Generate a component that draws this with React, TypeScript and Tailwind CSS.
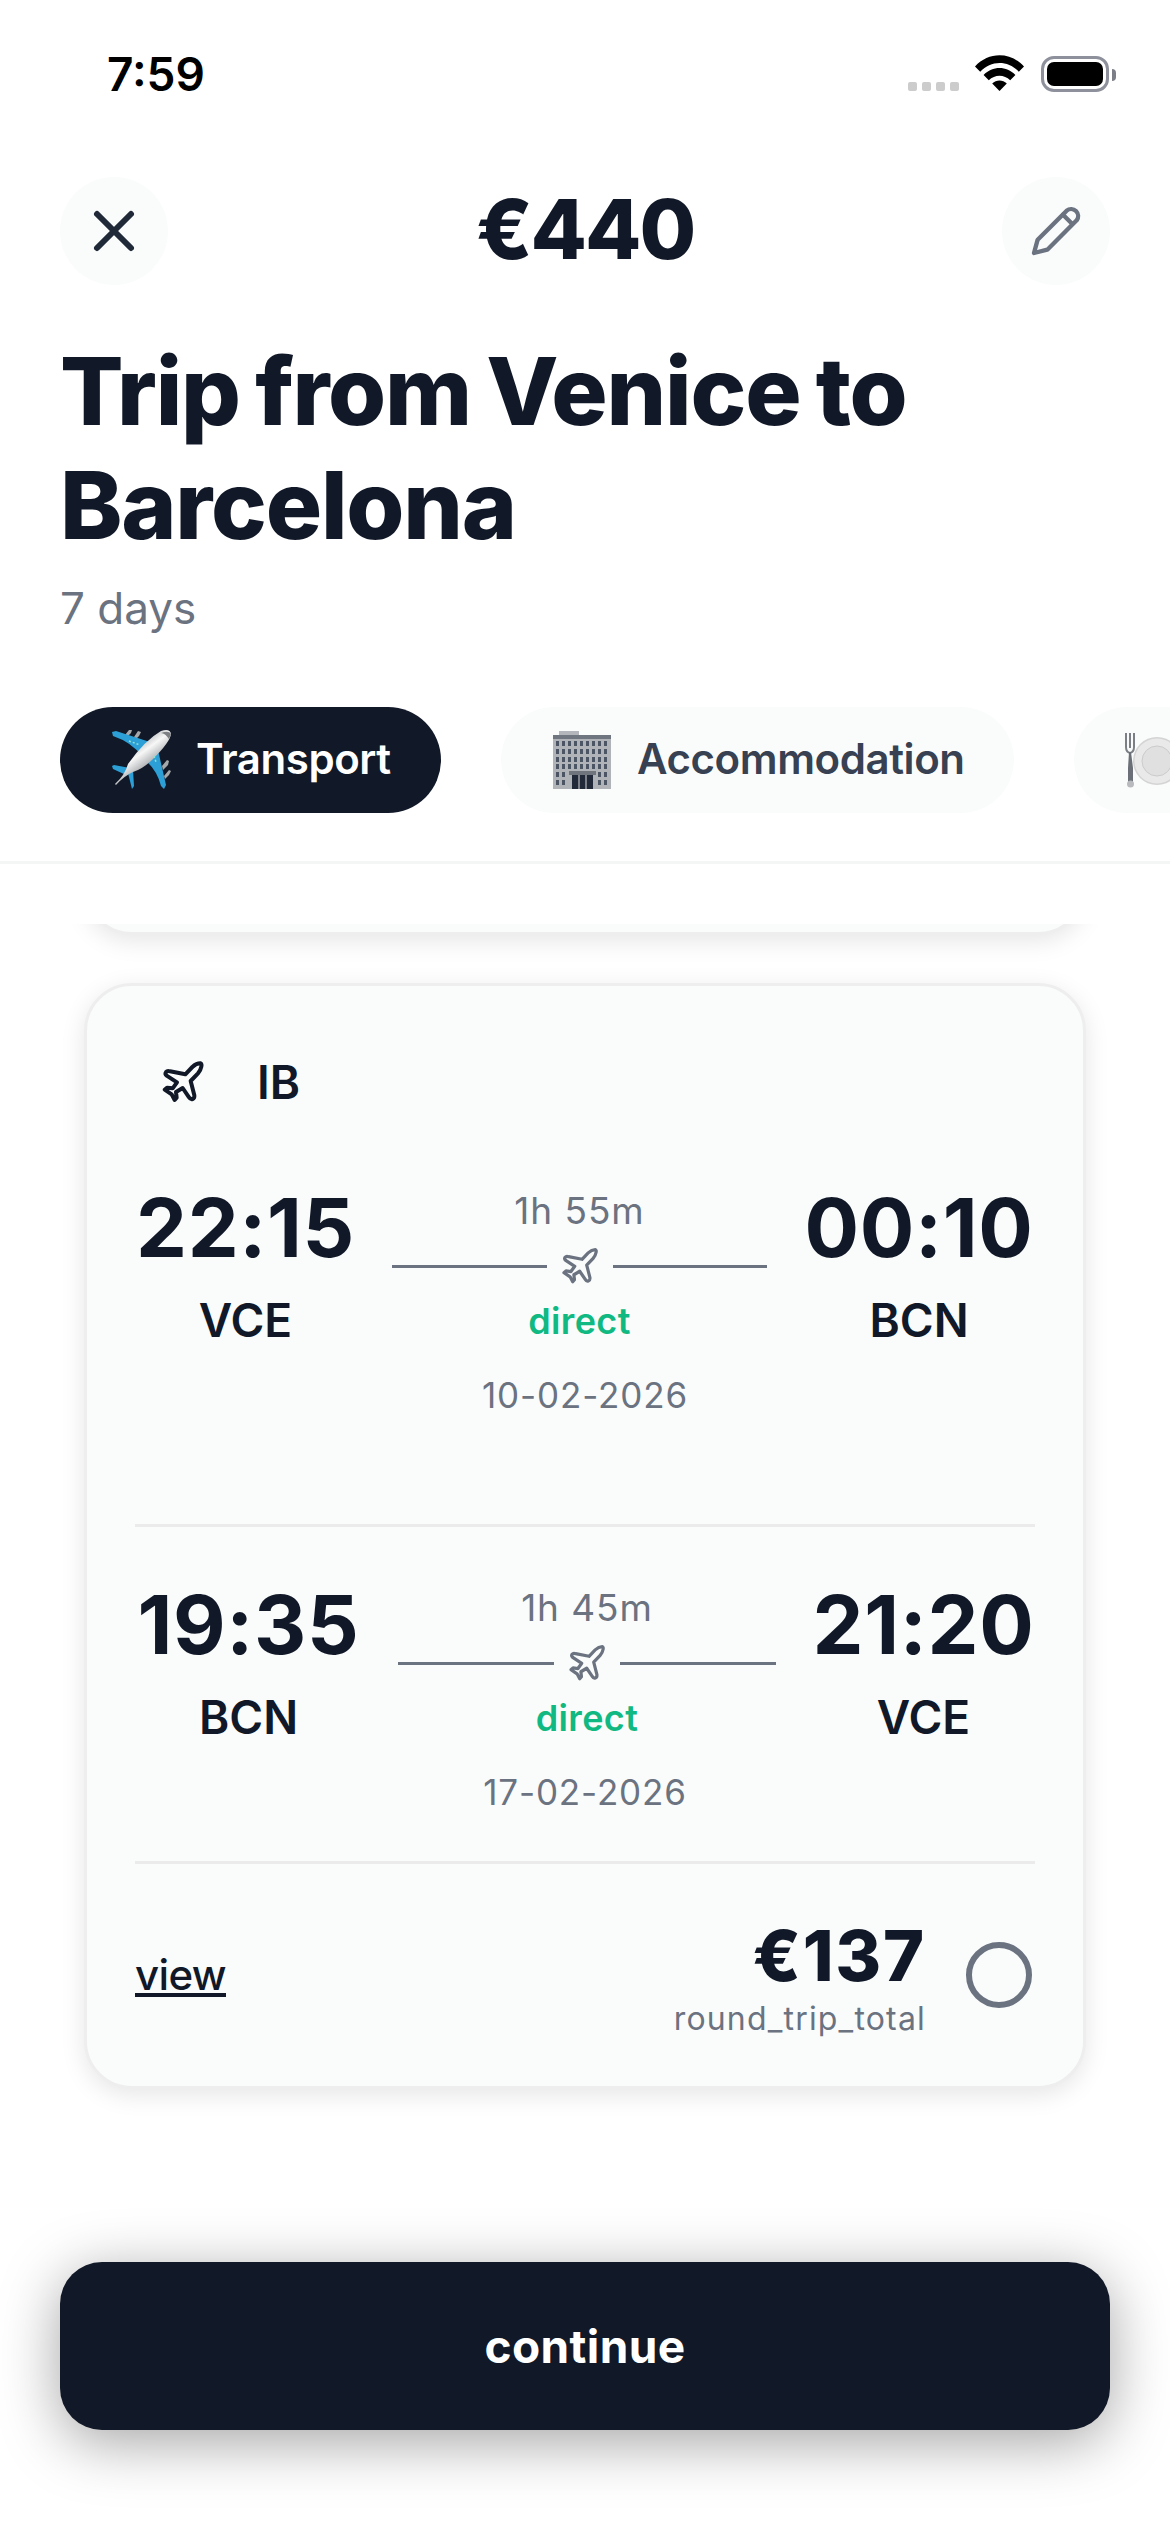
import { X } from 'lucide-react';

type Leg = {
  from: string;
  to: string;
  departure: string;
  arrival: string;
  duration: string;
  date: string;
  fromClass: string;
  toClass: string;
};

const outbound: Leg = {
  from: 'VCE',
  to: 'BCN',
  departure: '22:15',
  arrival: '00:10',
  duration: '1h 55m',
  date: '10-02-2026',
  fromClass: 'w-[221px]',
  toClass: 'w-[232px]',
};

const inbound: Leg = {
  from: 'BCN',
  to: 'VCE',
  departure: '19:35',
  arrival: '21:20',
  duration: '1h 45m',
  date: '17-02-2026',
  fromClass: 'w-[227px]',
  toClass: 'w-[223px]',
};

export default function App() {
  return (
    <main className="flex h-[2532px] w-[1170px] flex-col overflow-hidden bg-white font-['Inter',sans-serif] text-[#111827]">
      <StatusBar />

      {/* Header */}
      <header className="flex h-[715px] shrink-0 flex-col border-b-3 border-[#f4f5f5] pt-[28px]">
        <div className="flex items-center justify-between px-[60px]">
          <button className="flex size-[108px] items-center justify-center rounded-full bg-[#fafcfb]">
            <X className="size-[68px] text-[#1f2937]" strokeWidth={2.1} />
          </button>
          <div className="-mt-[3px] text-[82px] leading-[96px] font-extrabold tracking-[-0.025em]">€440</div>
          <button className="flex size-[108px] items-center justify-center rounded-full bg-[#fafcfb]">
            <PencilIcon />
          </button>
        </div>

        <div className="mt-[49px] px-[60px]">
          <h1 className="text-[94px] leading-[114px] font-extrabold tracking-[-0.013em] [word-spacing:-4px]">
            Trip from Venice to
            <br />
            Barcelona
          </h1>
          <p className="mt-[16px] text-[44px] leading-[60px] text-[#6b7280]">7 days</p>
        </div>

        {/* Category tabs */}
        <div className="mt-[69px] flex gap-[60px] overflow-hidden pl-[60px]">
          <button className="flex h-[106px] w-[381px] shrink-0 items-center rounded-full bg-[#111827] pl-[51px] text-[42px] font-semibold tracking-[-0.01em] text-white">
            <AirplaneEmoji />
            <span className="ml-[25px] pb-[3px]">Transport</span>
          </button>
          <button className="flex h-[106px] w-[513px] shrink-0 items-center rounded-full bg-[#fafcfb] pl-[51px] text-[42px] font-semibold tracking-[-0.01em] text-[#374151]">
            <BuildingEmoji />
            <span className="ml-[25px] pb-[3px]">Accommodation</span>
          </button>
          <button className="flex h-[106px] w-[381px] shrink-0 items-center rounded-full bg-[#fafcfb] pl-[48px]">
            <PlateEmoji />
          </button>
        </div>
      </header>

      {/* Offers list */}
      <section className="mt-[60px] flex h-[1206px] shrink-0 flex-col gap-[48px] overflow-hidden px-[84px]">
        <div className="-mt-[89px] h-[100px] shrink-0 rounded-[48px] border-3 border-[#eeeeee] bg-[#fafcfb] shadow-[0_6px_24px_rgba(0,0,0,0.1)]" />

        <article className="flex h-[1106px] shrink-0 flex-col rounded-[48px] border-3 border-[#eeeeee] bg-[#fafcfb] px-[48px] shadow-[0_6px_24px_rgba(0,0,0,0.1)]">
          <div className="mt-[66px] flex h-[60px] items-center pl-[24px]">
            <PlaneIcon className="size-[48px]" strokeWidth={12} />
            <span className="ml-[50px] text-[46px] font-semibold">IB</span>
          </div>

          <div className="mt-[68px] h-[347px] border-b-3 border-[#ebebeb]">
            <FlightLeg leg={outbound} />
          </div>
          <div className="h-[337px] border-b-3 border-[#ebebeb] pt-[50px]">
            <FlightLeg leg={inbound} />
          </div>

          <div className="flex flex-1 items-center">
            <a className="pb-[2px] text-[42px] font-medium tracking-[-0.015em] underline decoration-[4px] underline-offset-[3px]">
              view
            </a>
            <div className="mt-[5px] ml-auto text-right">
              <div className="text-[70px] leading-[80px] font-extrabold tracking-[0.025em]">€137</div>
              <div className="mt-[3px] text-[32px] leading-[40px] tracking-[0.037em] text-[#6b7280]">round_trip_total</div>
            </div>
            <div className="mr-[3px] ml-[40px] size-[66px] rounded-full border-6 border-[#6b7280]" />
          </div>
        </article>
      </section>

      {/* Bottom action */}
      <footer className="mt-[132px] px-[60px]">
        <button className="flex h-[168px] w-full items-center justify-center rounded-[42px] bg-[#111827] text-[46px] font-bold tracking-[0.008em] text-white shadow-[0_12px_60px_rgba(0,0,0,0.36)]">
          continue
        </button>
      </footer>
    </main>
  );
}

function StatusBar() {
  return (
    <div className="flex h-[149px] shrink-0 items-center justify-between pr-[54px] pl-[107px] text-black">
      <span className="text-[46px] font-semibold">7:59</span>
      <div className="flex items-center">
        <div className="mt-[24px] flex gap-[5px]">
          <span className="size-[9px] rounded-[2px] bg-[#cccccc]" />
          <span className="size-[9px] rounded-[2px] bg-[#cccccc]" />
          <span className="size-[9px] rounded-[2px] bg-[#cccccc]" />
          <span className="size-[9px] rounded-[2px] bg-[#cccccc]" />
        </div>
        <svg className="-mt-[3px] ml-[16px] h-[36px] w-[49px]" viewBox="0 0 49 36">
          <path d="M0 11.5C13.5-3.5 35.5-3.5 49 11.5L43.8 16.7C33 5 16 5 5.2 16.7Z" />
          <path d="M8.6 20C17.5 10.7 31.5 10.7 40.4 20L35.2 25.3C29.2 19.3 19.8 19.3 13.8 25.3Z" />
          <path d="M17.2 28.5C21.3 24.5 27.7 24.5 31.8 28.5L24.5 36Z" />
        </svg>
        <div className="-mt-px ml-[17px] flex h-[36px] w-[68px] rounded-[13px] border-3 border-[#8e919b] p-[3px]">
          <div className="flex-1 rounded-[7px] bg-black" />
        </div>
        <div className="ml-[3px] h-[12px] w-[4px] rounded-r-full bg-[#7c7f88]" />
      </div>
    </div>
  );
}

function FlightLeg({ leg }: { leg: Leg }) {
  return (
    <div>
      <div className="flex gap-[36px]">
        <div className={`shrink-0 text-center ${leg.fromClass}`}>
          <div className="text-[81px] leading-[96px] font-bold tracking-[0.008em]">{leg.departure}</div>
          <div className="mt-[14px] text-[46px] leading-[60px] font-semibold">{leg.from}</div>
        </div>

        <div className="flex flex-1 flex-col items-center pt-[7px] text-[#6b7280]">
          <div className="text-[37px] leading-[48px] tracking-[0.025em]">{leg.duration}</div>
          <div className="mt-[13px] flex w-full items-center gap-[12px]">
            <div className="h-[3px] flex-1 bg-[#6b7280]" />
            <PlaneIcon className="-my-[3px] size-[42px]" strokeWidth={11} />
            <div className="h-[3px] flex-1 bg-[#6b7280]" />
          </div>
          <div className="mt-[13px] text-[36px] leading-[48px] font-semibold tracking-[0.01em] text-[#10b981]">direct</div>
        </div>

        <div className={`shrink-0 text-center ${leg.toClass}`}>
          <div className="text-[81px] leading-[96px] font-bold tracking-[0.008em]">{leg.arrival}</div>
          <div className="mt-[14px] text-[46px] leading-[60px] font-semibold">{leg.to}</div>
        </div>
      </div>
      <div className="mt-[21px] text-center text-[35px] leading-[48px] tracking-[0.025em] text-[#6b7280]">{leg.date}</div>
    </div>
  );
}

function PlaneIcon({ className, strokeWidth }: { className?: string; strokeWidth: number }) {
  return (
    <svg
      className={className}
      viewBox="27 24 144 144"
      fill="none"
      stroke="currentColor"
      strokeWidth={strokeWidth}
      strokeLinecap="round"
      strokeLinejoin="round"
    >
      <path d="M106 73L127 51Q139 40 151 40 156 41 154 50 152 61 144 70L122 93 133 136Q134 145 128 147 121 149 117 142L98 114 78 126 80 143 74 150 65 133 44 119 51 113 68 115 81 97 50 77Q44 72 48 66 52 61 60 64Z" />
    </svg>
  );
}

function PencilIcon() {
  return (
    <svg
      className="size-[108px] text-[#6b7280]"
      viewBox="6 6 324 324"
      fill="none"
      stroke="currentColor"
      strokeWidth="13"
      strokeLinecap="round"
      strokeLinejoin="round"
    >
      <path d="M113 194L200 107A21 21 0 0 1 230 136L142 224 102 234Z" />
      <path d="M189 119L217 147" />
    </svg>
  );
}

function AirplaneEmoji() {
  return (
    <svg className="h-[60px] w-[60px]" viewBox="0 0 60 60">
      <defs>
        <linearGradient id="fuselage" x1="0.3" y1="0.3" x2="0.6" y2="0.7">
          <stop offset="0" stopColor="#b9bbbd" />
          <stop offset="0.4" stopColor="#f7f7f7" />
          <stop offset="1" stopColor="#9c9fa2" />
        </linearGradient>
      </defs>
      <path d="M14 5l4-5 3 0-1 3-4 4zM23 7l4-6 3 1-2 4-3 3zM51 36l5-6 2 1-1 4-5 5zM53 46l5-6 2 1-2 4-4 4z" fill="#a5a8ab" />
      <path d="M1 2l4-1 34 11-8 14Q20 12 2 6z" fill="#2b9fd6" />
      <path d="M47 20l8 35-2 4-3-3Q46 40 34 30z" fill="#2b9fd6" />
      <path d="M1 36l2-1 16 3-4 7-13-6zM17 43l5-3 1 16-2 3z" fill="#2b9fd6" />
      <path d="M4 54Q14 45 17 34 34 10 50 1q9-3 10 3-1 8-18 25-10 10-20 13Q13 46 5 55z" fill="url(#fuselage)" />
      <path d="M50 3q4 0 8 6l2-5q-2-4-10-1z" fill="#7d8083" />
      <path d="M18 11l11 4M43 26l2 6" stroke="#8ee0d5" strokeWidth="1.5" strokeDasharray="2 2" />
    </svg>
  );
}

function BuildingEmoji() {
  const rows = [11, 19, 27, 34, 42, 50];
  const cols = [4, 10, 16, 22, 28, 34, 40, 46, 52];
  return (
    <svg className="h-[60px] w-[60px]" viewBox="0 0 60 60">
      <rect x="7" y="1" width="20" height="5" fill="#b3b6ba" />
      <rect x="1" y="5" width="58" height="54" fill="#b0b3b7" />
      <rect x="1" y="5" width="58" height="4" fill="#6f7680" />
      {rows.map(y =>
        cols
          .filter(x => y < 42 || x < 16 || x > 42)
          .map(x => <rect key={`${x}-${y}`} x={x} y={y} width="3" height="5" fill="#4b5563" />)
      )}
      <rect x="17" y="41" width="27" height="4" fill="#70757d" />
      <rect x="20" y="45" width="21" height="14" fill="#222938" />
      <path d="M27 45v14M34 45v14" stroke="#9a9da3" strokeWidth="1.5" />
    </svg>
  );
}

function PlateEmoji() {
  return (
    <svg className="h-[60px] w-[72px]" viewBox="0 0 72 60">
      <circle cx="35" cy="31" r="24" fill="#d4d4d4" />
      <circle cx="35" cy="31" r="22.500" fill="#e9e9e9" />
      <circle cx="35" cy="31" r="15" fill="#e0e0e0" stroke="#cbcbcb" />
      <path d="M4 3v14q0 5 4 6M8 3v15M12 3v14q0 5-4 6" stroke="#7c8086" strokeWidth="2" fill="none" />
      <path d="M7 22h2l2 16v16q-3 3-5 0V38z" fill="#6b7078" />
      <circle cx="8.500" cy="54" r="3.500" fill="#b8babd" />
    </svg>
  );
}
